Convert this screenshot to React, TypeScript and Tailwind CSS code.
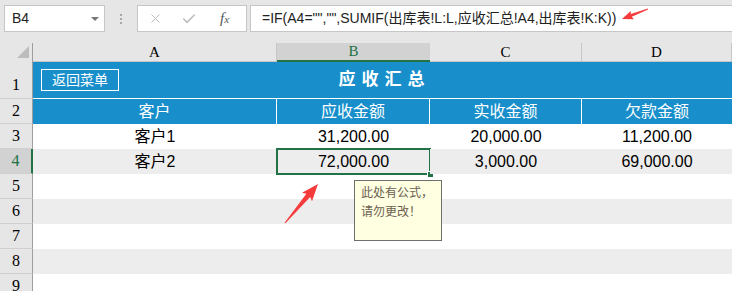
import React from 'react';
import { X, Check } from 'lucide-react';

const cols = [
  { key: 'A', w: 'w-[244px]' },
  { key: 'B', w: 'w-[153px]' },
  { key: 'C', w: 'w-[152px]' },
  { key: 'D', w: 'flex-1' },
];

const rows = [
  { name: '客户1', due: '31,200.00', paid: '20,000.00', owe: '11,200.00' },
  { name: '客户2', due: '72,000.00', paid: '3,000.00', owe: '69,000.00' },
];

const sans = "font-['Liberation_Sans','Noto_Sans_CJK_SC',sans-serif]";
const serif = "font-['Liberation_Serif','Noto_Serif',serif]";

const RowHead: React.FC<{ n: number; h: string; active?: boolean; bottom?: boolean }> = ({ n, h, active, bottom }) => (
  <div
    className={`${h} w-[33px] shrink-0 flex justify-center ${bottom ? 'items-end pb-[1px]' : 'items-center'} border-b border-[#cfcfcf] ${serif} text-[16px] ${
      active ? 'bg-[#d2d2d2] text-[#217346] border-r-2 border-r-[#217346]' : 'bg-[#e6e6e6] text-black border-r border-r-[#9e9e9e]'
    }`}
  >
    {n}
  </div>
);

const App: React.FC = () => {
  return (
    <div className={`relative w-[732px] h-[291px] overflow-hidden bg-white ${sans}`}>
      {/* formula bar */}
      <div className="h-[43px] bg-[#e6e6e6] flex items-start pt-[5px] pl-[4px]">
        <div className="w-[101px] h-[27px] bg-white border border-[#c6c6c6] flex items-center justify-between pl-[7px] pr-[4px]">
          <span className="text-[14px] text-[#222]">B4</span>
          <span className="w-0 h-0 border-l-[4px] border-r-[4px] border-t-[4px] border-l-transparent border-r-transparent border-t-[#777] mr-[1px]" />
        </div>
        <div className="w-[32px] h-[27px] flex flex-col items-center justify-center gap-[2px]">
          <span className="w-[2px] h-[2px] bg-[#a8a8a8]" />
          <span className="w-[2px] h-[2px] bg-[#a8a8a8]" />
          <span className="w-[2px] h-[2px] bg-[#a8a8a8]" />
        </div>
        <div className="w-[110px] h-[27px] bg-white border border-[#c6c6c6] flex items-center pl-[10px]">
          <X className="w-[15px] h-[15px] text-[#bdbdbd]" strokeWidth={1.6} />
          <Check className="w-[16px] h-[16px] text-[#bdbdbd] ml-[18px]" strokeWidth={2.4} />
          <span className={`${serif} italic text-[15px] text-[#555] ml-[23px] leading-none`}>
            f<span className="text-[11px]">x</span>
          </span>
        </div>
        <div className="flex-1 h-[27px] bg-white border border-[#c6c6c6] border-r-0 ml-[3px] flex items-center pl-[11px]">
          <span className="text-[14px] text-[#222] whitespace-nowrap">
            =IF(A4="","",SUMIF(出库表!L:L,应收汇总!A4,出库表!K:K))
          </span>
        </div>
      </div>

      {/* column header */}
      <div className="h-[19px] flex bg-[#e6e6e6]">
        <div className="w-[33px] shrink-0 border-r border-[#9e9e9e] flex items-end justify-end pr-[3px] pb-[4px]">
          <svg width="12" height="12" viewBox="0 0 12 12">
            <polygon points="12,0 12,12 0,12" fill="#bcbcbc" />
          </svg>
        </div>
        {cols.map((c) => (
          <div
            key={c.key}
            className={`${c.w} shrink-0 flex items-center justify-center ${serif} text-[15px] ${
              c.key === 'B'
                ? 'bg-[#d2d2d2] text-[#217346] border-b-2 border-[#217346]'
                : 'text-black border-r border-[#c6c6c6] border-b border-b-[#c6c6c6]'
            }`}
          >
            {c.key}
          </div>
        ))}
      </div>

      {/* row 1 */}
      <div className="flex h-[37px]">
        <RowHead n={1} h="h-[37px]" bottom />
        <div className="flex-1 bg-[#188fcb] flex items-center relative border-b border-white">
          <div className="ml-[8px] w-[78px] h-[22px] border border-white flex items-center justify-center text-white text-[14px]">
            返回菜单
          </div>
          <div className="absolute inset-0 flex items-center justify-center pl-[4px] text-white font-bold text-[17px] tracking-[6px] pointer-events-none">
            应收汇总
          </div>
        </div>
      </div>

      {/* row 2 */}
      <div className="flex h-[25px]">
        <RowHead n={2} h="h-[25px]" />
        {['客户', '应收金额', '实收金额', '欠款金额'].map((t, i) => (
          <div
            key={t}
            className={`${cols[i].w} shrink-0 bg-[#188fcb] text-white text-[16px] flex items-center justify-center ${
              i < 3 ? 'border-r border-white' : ''
            }`}
          >
            {t}
          </div>
        ))}
      </div>

      {/* data rows */}
      {rows.map((r, ri) => (
        <div key={r.name} className="flex h-[25px]">
          <RowHead n={ri + 3} h="h-[25px]" active={ri === 1} />
          {[r.name, r.due, r.paid, r.owe].map((t, i) => (
            <div
              key={i}
              className={`${cols[i].w} shrink-0 relative text-[16px] text-black flex items-center justify-center ${
                ri === 1 ? 'bg-[#ededed]' : 'bg-white'
              }`}
            >
              {t}
              {ri === 1 && i === 1 && (
                <div className="absolute left-[-1px] top-[-1px] w-[155px] h-[27px] border-2 border-[#217346]">
                  <span className="absolute right-[-5px] bottom-[-5px] w-[7px] h-[7px] bg-[#217346] border border-white" />
                </div>
              )}
            </div>
          ))}
        </div>
      ))}

      {/* empty rows */}
      {[5, 6, 7, 8, 9].map((n) => (
        <div key={n} className="flex h-[25px]">
          <RowHead n={n} h="h-[25px]" />
          <div className={`flex-1 ${n % 2 === 0 ? 'bg-[#ededed]' : 'bg-white'}`} />
        </div>
      ))}

      {/* comment */}
      <div className="absolute left-[354px] top-[180px] w-[88px] h-[61px] bg-[#ffffe1] border border-[#6f6f6f] pl-[6px] pt-[3px] text-[12px] leading-[19px] text-[#6b5e50]">
        <div>此处有公式，</div>
        <div>请勿更改！</div>
      </div>

      {/* arrows */}
      <svg className="absolute left-0 top-0 pointer-events-none" width="732" height="291" viewBox="0 0 732 291">
        <polygon
          fill="#f53b3b"
          points="284.6,222.7 306.4,193.8 302,192.8 318,184 312,201.2 310.2,197 285.4,223.3"
        />
        <polygon
          fill="#f53b3b"
          points="647.9,8.6 630.8,14 630.7,10.9 622,19 633.9,19.3 631.8,16.8 648.1,9.4"
        />
      </svg>
    </div>
  );
};

export default App;
